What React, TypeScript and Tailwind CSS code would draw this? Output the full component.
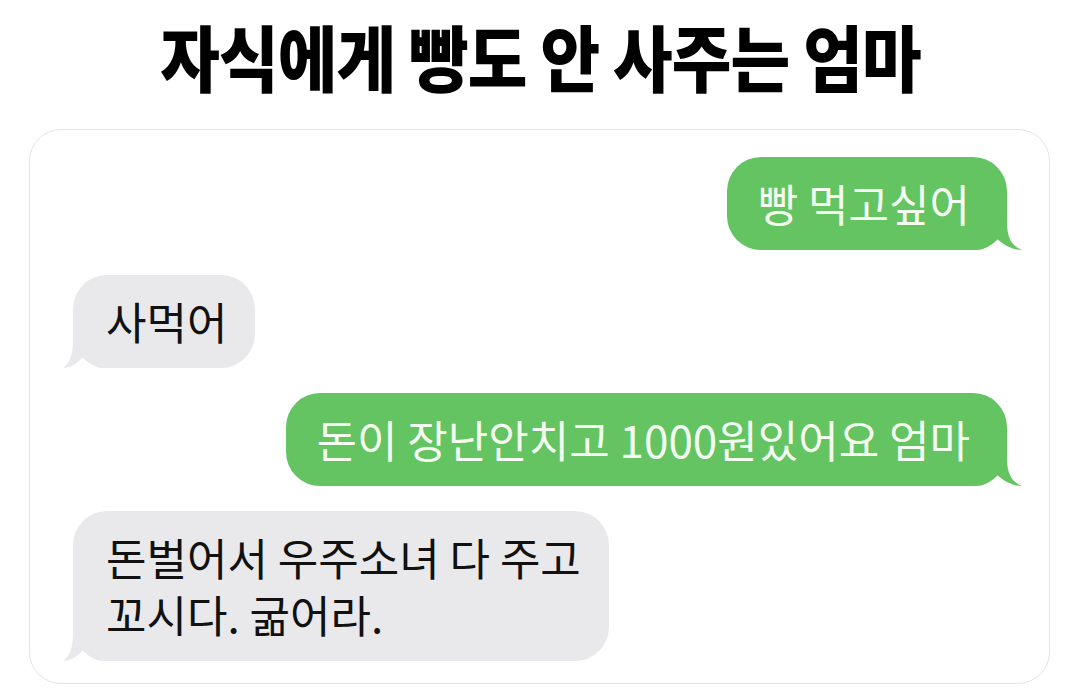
import React from "react";

const font = { fontFamily: '"Noto Sans CJK KR", "Noto Sans", sans-serif' };

function RightTail() {
  return (
    <svg
      className="absolute bottom-0 right-[-16px]"
      width="48"
      height="40"
      viewBox="0 0 48 40"
    >
      <path
        d="M0 0 H32 V12 C32 28 37 36 47 40 C39 40 30 36 22 29 C17 35 10 40 0 40 Z"
        fill="#63c461"
      />
    </svg>
  );
}

function LeftTail() {
  return (
    <svg
      className="absolute bottom-0 left-[-16px]"
      width="48"
      height="40"
      viewBox="0 0 48 40"
    >
      <path
        d="M48 0 H16 V12 C16 28 12 36 6 40 C13 40 20 36 26 29 C31 35 38 40 48 40 Z"
        fill="#e9e9eb"
      />
    </svg>
  );
}

function Sent({ text }: { text: string }) {
  return (
    <div className="flex justify-end">
      <div className="relative">
        <RightTail />
        <div className="relative rounded-[34px] bg-[#63c461] pl-[31px] pr-[37px] py-[18px] text-[44px] leading-[57px] text-[#f3fdf0] whitespace-nowrap">
          {text}
        </div>
      </div>
    </div>
  );
}

function Received({ lines }: { lines: string[] }) {
  return (
    <div className="flex justify-start">
      <div className="relative">
        <LeftTail />
        <div className="relative rounded-[34px] bg-[#e9e9eb] pl-[33px] pr-[28px] py-[18px] text-[44px] leading-[57px] text-[#111111] whitespace-nowrap">
          {lines.map((l, i) => (
            <div key={i}>{l}</div>
          ))}
        </div>
      </div>
    </div>
  );
}

export default function App() {
  return (
    <div className="w-[1080px] h-[694px] bg-white overflow-hidden" style={font}>
      <div className="pt-[19px] pb-[38px] flex justify-center">
        <div className="text-[72px] leading-[72px] font-black text-black tracking-[-1px] whitespace-nowrap scale-x-[0.9]">
          자식에게 빵도 안 사주는 엄마
        </div>
      </div>
      <div className="ml-[29px] mr-[30px] h-[555px] rounded-[32px] border border-[#e4e4e4] bg-white pt-[27px] pl-[43px] pr-[42px] flex flex-col gap-[25px]">
        <Sent text="빵 먹고싶어" />
        <Received lines={["사먹어"]} />
        <Sent text="돈이 장난안치고 1000원있어요 엄마" />
        <Received lines={["돈벌어서 우주소녀 다 주고", "꼬시다. 굶어라."]} />
      </div>
    </div>
  );
}
